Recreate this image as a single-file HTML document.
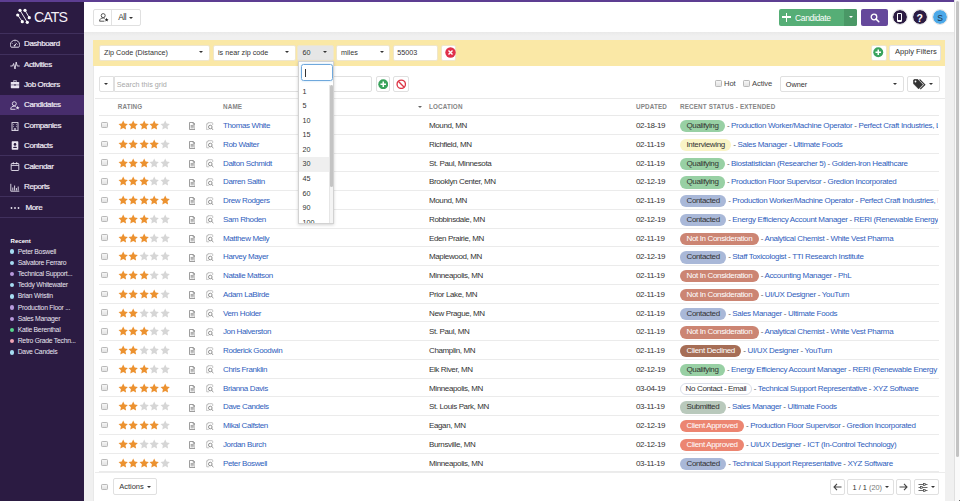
<!DOCTYPE html>
<html><head><meta charset="utf-8">
<style>
*{box-sizing:border-box;margin:0;padding:0}
html,body{width:960px;height:501px;overflow:hidden;background:#f0f0f0;font-family:"Liberation Sans",sans-serif;font-size:7.3px;color:#333}
.abs{position:absolute}
#stripe{position:absolute;left:0;top:0;width:954px;height:2px;background:#5d3e92}
#side{position:absolute;left:0;top:2px;width:84px;height:499px;background:#2b1b42;color:#e9e4f0}
#side .dv{position:absolute;left:0;width:84px;height:1px;background:#40305d}
#side .nav{position:absolute;left:0;width:84px;height:20px;line-height:20px;font-size:8px;letter-spacing:-0.38px;color:#f0ecf5;-webkit-text-stroke:0.2px #f0ecf5}
#side .nav .t{position:absolute;left:24px;top:0}
#side .nav svg{position:absolute;left:10px;top:5.5px;width:10px;height:9px}
#side .act{background:#472d6c}
.logo{position:absolute;left:16px;top:7px}
.logotxt{position:absolute;left:34px;top:6.6px;font-size:14.2px;color:#f4f0f8;letter-spacing:-0.9px;line-height:16px}
.rtitle{position:absolute;left:10.5px;top:234.5px;font-size:6.1px;font-weight:bold;color:#fff}
.rc{position:absolute;left:17.7px;font-size:6.8px;letter-spacing:-0.25px;color:#eae6f1;line-height:8px;white-space:nowrap}
.rc .dot{position:absolute;left:-7.8px;top:1.8px;width:4.4px;height:4.4px;border-radius:50%}
#hdr{position:absolute;left:84px;top:2px;width:870px;height:30px;background:#fff}
#scroll{position:absolute;left:953.5px;top:0;width:6.5px;height:501px;background:#fafafa;border-left:1px solid #e0e0e0}
#scroll .thumb{position:absolute;left:1.3px;top:1px;width:3.2px;height:456px;background:#c3c3c3;border-radius:2px}
.btn{position:absolute;background:#fff;border:1px solid #e0e0e0;border-radius:2px}
.caret{position:absolute;width:0;height:0;border-left:2.5px solid transparent;border-right:2.5px solid transparent;border-top:2.9px solid #333}
#filter{position:absolute;left:93px;top:40px;width:852px;height:25.7px;background:#fae8a6}
.sel{position:absolute;top:4.5px;height:16.2px;background:#fff;border-radius:2px;border:1px solid #efe6cc;line-height:14.2px;font-size:7.2px;color:#333}
.sel .t{position:absolute;left:4.5px;top:0.2px}
#panel{position:absolute;left:93px;top:65.7px;width:852px;height:436px;background:#fff;border-left:1px solid #e8e8e8}
.hline{position:absolute;height:1px;background:#e9e9e9}
.th{position:absolute;top:102.8px;font-size:6.3px;font-weight:bold;color:#858585;letter-spacing:0.15px;line-height:7px}
.row{position:absolute;left:99px;width:840px;height:18.75px;border-bottom:1px solid #ebebeb}
.row > span{position:absolute}
.cb{position:absolute;width:6.5px;height:6.5px;border:1px solid #b9b9b9;border-radius:1.2px;background:linear-gradient(#f6f6f6,#e2e2e2)}
.stars{left:18.5px;top:4px;height:9px;white-space:nowrap;font-size:0}
.st{width:10.4px;height:10.4px;margin-right:0.2px;display:inline-block}
.st.on{fill:#ec9230}
.st.off{fill:#d6d6d6}
.i1{left:89.5px;top:6.3px}
.i1 svg{width:6.5px;height:8px;display:block}
.i2{left:107.3px;top:5.7px}
.i2 svg{width:8px;height:8.5px;display:block}
.nm{left:124px;top:6px;color:#2f60bd;font-size:8px;letter-spacing:-0.38px;line-height:8px;white-space:nowrap}
.loc{left:330px;top:6px;font-size:8px;letter-spacing:-0.37px;line-height:8px;white-space:nowrap;color:#333}
.upd{left:537px;top:6px;font-size:8px;letter-spacing:-0.37px;line-height:8px;white-space:nowrap;color:#333}
.stat{left:581px;top:4.1px;width:258px;overflow:hidden;white-space:nowrap;line-height:12px;font-size:8px;letter-spacing:-0.33px}
.badge{display:inline-block;height:12.3px;line-height:12.3px;padding:0 6.5px;border-radius:6.2px;color:#333;font-size:8px;letter-spacing:-0.36px}
.b-q{background:#98d0a4}
.b-i{background:#faf4c6}
.b-c{background:#a9b8d8}
.b-n{background:#cc8573;color:#fff}
.b-d{background:#a66e56;color:#fff}
.b-e{background:#fff;border:1px solid #d9dde7;line-height:10.3px;padding:0 4.6px !important}
.b-s{background:#b9c9bc}
.b-a{background:#ec8571;color:#fff}
.dash{color:#555}
.lk{color:#2f60bd}
#dd{position:absolute;left:298px;top:60.8px;width:36px;height:163.2px;background:#fff;border:1px solid #d2d2d2;box-shadow:0 1px 3px rgba(0,0,0,0.18);overflow:hidden}
#dd .in{position:absolute;left:2px;top:2.2px;width:31.5px;height:17.2px;border:1px solid #6fa8dc;border-radius:2.5px;box-shadow:0 0 2px rgba(102,175,233,0.5)}
#dd .in .cur{position:absolute;left:3px;top:4px;width:0.8px;height:8px;background:#333}
#dd > div:not(.in):not(.sb){position:absolute;left:0;width:30px;height:14.55px;line-height:14.55px;font-size:7.2px;color:#333}
#dd > div span{position:absolute;left:3.5px}
#dd .hl{background:#efefef}
#dd .sb{position:absolute;left:29.5px;top:23.2px;width:5.5px;height:140px;background:#f4f4f4;border-left:1px solid #e6e6e6}
#dd .sb i{position:absolute;left:0.2px;top:0;width:3px;height:101.7px;background:#c4c4c4;border-radius:1.5px}
</style></head><body>
<div id="stripe"></div>
<div id="side">
  <svg class="logo" width="20" height="18" viewBox="14 8 20 18" style="left:0;top:-2px;position:absolute;left:14px;top:6px">
    <g stroke="#fff" stroke-width="0.9" fill="none">
      <path d="M17.7 15 L22.3 21.7"/><path d="M20 10.3 L27.3 22.3"/><path d="M25 10.3 L29.3 17.7"/>
    </g>
    <g fill="#fff"><circle cx="20" cy="10.3" r="1.6"/><circle cx="25" cy="10.3" r="1.6"/><circle cx="17.7" cy="15" r="1.6"/><circle cx="29.3" cy="17.7" r="1.6"/><circle cx="22.3" cy="21.7" r="1.6"/><circle cx="27.3" cy="22.3" r="1.6"/></g>
  </svg>
  <div class="logotxt">CATS</div>
  <div class="dv" style="top:31px"></div>
  <div class="nav" style="top:31.5px"><svg viewBox="0 0 10 9"><path d="M1.2 8.2 C0.2 7 0.3 5.8 0.5 5 C1 2.5 3 1.2 5 1.2 C7 1.2 9 2.5 9.5 5 C9.7 5.8 9.8 7 8.8 8.2 Z" fill="none" stroke="#e9e4f0" stroke-width="0.95"/><path d="M4.3 6.8 L6.6 4.2" stroke="#e9e4f0" stroke-width="1"/><circle cx="4.6" cy="6.6" r="0.9" fill="#e9e4f0"/><circle cx="2.6" cy="4.4" r="0.45" fill="#e9e4f0"/><circle cx="5" cy="3" r="0.45" fill="#e9e4f0"/><circle cx="7.6" cy="5.6" r="0.45" fill="#e9e4f0"/></svg><span class="t">Dashboard</span></div>
  <div class="dv" style="top:52px"></div>
  <div class="nav" style="top:53.1px"><svg viewBox="0 0 10 9"><path d="M0.3 5 H2.6 L3.6 2.5 L5 8 L6.2 1 L7.2 5 H9.7" fill="none" stroke="#e9e4f0" stroke-width="0.9"/></svg><span class="t">Activities</span></div>
  <div class="nav" style="top:72.5px"><svg viewBox="0 0 10 9"><path d="M3.5 1.5 V0.8 H6.5 V1.5" fill="none" stroke="#e9e4f0" stroke-width="0.9"/><rect x="0.8" y="2" width="8.4" height="6.2" rx="0.6" fill="#e9e4f0"/><rect x="4.3" y="4.3" width="1.4" height="1.3" fill="#2b1b42"/><path d="M0.8 4.9 H9.2" stroke="#2b1b42" stroke-width="0.5"/></svg><span class="t">Job Orders</span></div>
  <div class="nav act" style="top:93px"><svg viewBox="0 0 10 9"><circle cx="4.3" cy="2.7" r="2" fill="none" stroke="#e9e4f0" stroke-width="0.9"/><path d="M0.7 8.3 C0.7 5.8 2.5 5.2 4.3 5.2 C5 5.2 5.6 5.3 6 5.5" fill="none" stroke="#e9e4f0" stroke-width="0.9"/><path d="M0.7 8.3 H5.5" stroke="#e9e4f0" stroke-width="0.9"/><path d="M7.6 4.8 L8.2 6.2 L9.6 6.3 L8.5 7.2 L8.9 8.6 L7.6 7.8 L6.3 8.6 L6.7 7.2 L5.6 6.3 L7 6.2Z" fill="#e9e4f0"/></svg><span class="t">Candidates</span></div>
  <div class="nav" style="top:114px"><svg viewBox="0 0 10 9"><rect x="2" y="0.6" width="6" height="8" fill="none" stroke="#e9e4f0" stroke-width="0.9"/><path d="M3.6 2.3v0.8M6.4 2.3v0.8M3.6 4.3v0.8M6.4 4.3v0.8M4.3 8.5V6.6H5.7V8.5" stroke="#e9e4f0" stroke-width="0.8" fill="none"/></svg><span class="t">Companies</span></div>
  <div class="nav" style="top:133.5px"><svg viewBox="0 0 10 9"><rect x="1.7" y="0.3" width="6.6" height="8.4" rx="0.6" fill="#e9e4f0"/><circle cx="5" cy="3.4" r="1.3" fill="#2b1b42"/><path d="M3 7 C3 5.3 7 5.3 7 7Z" fill="#2b1b42"/></svg><span class="t">Contacts</span></div>
  <div class="dv" style="top:152.6px"></div>
  <div class="nav" style="top:154.5px"><svg viewBox="0 0 10 9"><rect x="1.2" y="1.5" width="7.6" height="7" rx="0.6" fill="none" stroke="#e9e4f0" stroke-width="0.9"/><path d="M1.2 3.4H8.8M3.3 0.2V2.3M6.7 0.2V2.3" stroke="#e9e4f0" stroke-width="0.9"/></svg><span class="t">Calendar</span></div>
  <div class="nav" style="top:175.1px"><svg viewBox="0 0 10 9"><path d="M0.8 0.8V8.2H9.3" fill="none" stroke="#e9e4f0" stroke-width="0.9"/><path d="M2.8 7.5V4.5M4.6 7.5V2.5M6.4 7.5V5M8.2 7.5V3.5" stroke="#e9e4f0" stroke-width="0.9"/></svg><span class="t">Reports</span></div>
  <div class="dv" style="top:194px"></div>
  <div class="nav" style="top:195.8px"><svg viewBox="0 0 10 9"><circle cx="1.5" cy="5" r="0.9" fill="#e9e4f0"/><circle cx="5" cy="5" r="0.9" fill="#e9e4f0"/><circle cx="8.5" cy="5" r="0.9" fill="#e9e4f0"/></svg><span class="t" style="left:25.5px">More</span></div>
  <div class="dv" style="top:215px"></div>
  <div class="rtitle">Recent</div>
</div>
<div id="recent">
<div class="rc" style="top:247.50px"><span class="dot" style="background:#a6dcf2"></span>Peter Boswell</div>
<div class="rc" style="top:258.72px"><span class="dot" style="background:#a6dcf2"></span>Salvatore Ferraro</div>
<div class="rc" style="top:269.94px"><span class="dot" style="background:#b799dc"></span>Technical Support...</div>
<div class="rc" style="top:281.16px"><span class="dot" style="background:#a6dcf2"></span>Teddy Whitewater</div>
<div class="rc" style="top:292.38px"><span class="dot" style="background:#a6dcf2"></span>Brian Wristin</div>
<div class="rc" style="top:303.60px"><span class="dot" style="background:#b799dc"></span>Production Floor ...</div>
<div class="rc" style="top:314.82px"><span class="dot" style="background:#b799dc"></span>Sales Manager</div>
<div class="rc" style="top:326.04px"><span class="dot" style="background:#58d68d"></span>Katie Berenthal</div>
<div class="rc" style="top:337.26px"><span class="dot" style="background:#f0a3b5"></span>Retro Grade Techn...</div>
<div class="rc" style="top:348.48px"><span class="dot" style="background:#a6dcf2"></span>Dave Candels</div>

</div>
<div id="hdr"></div>
<div class="abs" style="left:84px;top:32px;width:870px;height:4px;background:linear-gradient(#e9e9e9,#f0f0f0)"></div>
<!-- header All button -->
<div class="btn" style="left:93.3px;top:9.2px;width:47.3px;height:16.6px"></div>
<div class="abs" style="left:111.2px;top:10px;width:1px;height:15.3px;background:#e2e2e2"></div>
<svg class="abs" style="left:98.5px;top:12.8px" width="10" height="9" viewBox="0 0 10 9"><circle cx="4.2" cy="2.6" r="2" fill="none" stroke="#444" stroke-width="0.9"/><path d="M0.6 8.2 C0.6 5.6 2.4 5 4.2 5 C4.9 5 5.5 5.1 5.9 5.3" fill="none" stroke="#444" stroke-width="0.9"/><path d="M0.6 8.2 H5.4" stroke="#444" stroke-width="0.9"/><path d="M7.6 4.8 L8.2 6.2 L9.6 6.3 L8.5 7.2 L8.9 8.6 L7.6 7.8 L6.3 8.6 L6.7 7.2 L5.6 6.3 L7 6.2Z" fill="#222"/></svg>
<div class="abs" style="left:118.2px;top:13.2px;font-size:8.2px;letter-spacing:-0.4px;line-height:9px;color:#333">All</div>
<div class="caret" style="left:128.5px;top:16.5px"></div>
<!-- candidate button -->
<div class="abs" style="left:778.9px;top:9.3px;width:78.6px;height:16.4px;background:#56ae76;border-radius:2px"></div>
<div class="abs" style="left:844.3px;top:9.3px;width:13.2px;height:16.4px;background:#4a9866;border-radius:0 2px 2px 0"></div>
<div class="abs" style="left:782px;top:12.7px;width:9px;height:9px"><div class="abs" style="left:3.7px;top:0;width:1.7px;height:9px;background:#fff"></div><div class="abs" style="left:0;top:3.7px;width:9px;height:1.7px;background:#fff"></div></div>
<div class="abs" style="left:795px;top:13.6px;font-size:8.5px;letter-spacing:-0.35px;line-height:9px;color:#fff">Candidate</div>
<div class="caret" style="left:848.5px;top:16.3px;border-top-color:#fff"></div>
<div class="abs" style="left:861px;top:9.3px;width:27px;height:16.4px;background:#65489b;border-radius:2px"></div>
<svg class="abs" style="left:869.5px;top:12.5px" width="10" height="10" viewBox="0 0 10 10"><circle cx="4" cy="4" r="2.8" fill="none" stroke="#fff" stroke-width="1.3"/><path d="M6.1 6.1L8.8 8.8" stroke="#fff" stroke-width="1.5" stroke-linecap="round"/></svg>
<div class="abs" style="left:891.6px;top:9.4px;width:16px;height:16px;border-radius:50%;background:#2b1b42;border:1.8px solid #e2e2e2;background-clip:padding-box"></div>
<div class="abs" style="left:896.9px;top:13.1px;width:5.4px;height:8.6px;border:1px solid #fff;border-bottom-width:2.2px;border-radius:1.2px"></div>
<div class="abs" style="left:911.8px;top:9.4px;width:16px;height:16px;border-radius:50%;background:#2b1b42;border:1.8px solid #e2e2e2;background-clip:padding-box"></div>
<div class="abs" style="left:911.8px;top:10.7px;width:16px;text-align:center;font-size:10.5px;font-weight:bold;line-height:14px;color:#fff">?</div>
<div class="abs" style="left:932.2px;top:9.4px;width:16px;height:16px;border-radius:50%;background:#4ba8e8;border:1.8px solid #e2e2e2;background-clip:padding-box"></div>
<div class="abs" style="left:932.2px;top:10.6px;width:16px;text-align:center;font-size:8.5px;line-height:14px;color:#1b3047">S</div>
<div id="scroll"><div class="thumb"></div></div>

<div id="filter">
  <div class="sel" style="left:5.5px;width:111px"><span class="t">Zip Code (Distance)</span><div class="caret" style="left:99.5px;top:5.8px"></div></div>
  <div class="sel" style="left:119.5px;width:83px"><span class="t">is near zip code</span><div class="caret" style="left:71.2px;top:5.8px"></div></div>
  <div class="sel" style="left:204px;width:36.5px;background:#e6e6e6"><span class="t">60</span><div class="caret" style="left:24.8px;top:5.8px"></div></div>
  <div class="sel" style="left:242.5px;width:54.8px"><span class="t">miles</span><div class="caret" style="left:43.0px;top:5.8px"></div></div>
  <div class="sel" style="left:300.2px;width:45.3px"><span class="t" style="left:3px">55003</span></div>
  <div class="sel" style="left:348.2px;width:15.3px"></div>
  <svg class="abs" style="left:351.5px;top:7.2px" width="11" height="11" viewBox="0 0 11 11"><circle cx="5.5" cy="5.5" r="5.2" fill="#e0304a"/><path d="M3.5 3.5L7.5 7.5M7.5 3.5L3.5 7.5" stroke="#fff" stroke-width="1.4"/></svg>
  <div class="sel" style="left:777.5px;width:16px"></div>
  <svg class="abs" style="left:780.3px;top:7.3px" width="10.5" height="10.5" viewBox="0 0 11 11"><circle cx="5.5" cy="5.5" r="5.2" fill="#3aa35c"/><path d="M5.5 2.6V8.4M2.6 5.5H8.4" stroke="#fff" stroke-width="1.6"/></svg>
  <div class="sel" style="left:796px;width:52px;border:1px solid #e4e4e4"><span class="t" style="left:5px;top:-0.5px;font-size:7.6px">Apply Filters</span></div>
</div>

<div id="panel"></div>
<!-- grid toolbar -->
<div class="btn" style="left:99px;top:75.8px;width:15px;height:16.7px;border-radius:2px 0 0 2px"></div>
<div class="caret" style="left:104px;top:82.8px"></div>
<div class="btn" style="left:113.5px;top:75.8px;width:258.2px;height:16.7px;border-radius:0 2px 2px 0"></div>
<div class="abs" style="left:116.8px;top:79.8px;font-size:7.2px;line-height:9px;color:#a8a8a8">Search this grid</div>
<div class="btn" style="left:375.8px;top:75.8px;width:14.6px;height:16.7px"></div>
<svg class="abs" style="left:377.9px;top:78.9px" width="10.5" height="10.5" viewBox="0 0 11 11"><circle cx="5.5" cy="5.5" r="5.2" fill="#3aa35c"/><path d="M5.5 2.6V8.4M2.6 5.5H8.4" stroke="#fff" stroke-width="1.6"/></svg>
<div class="btn" style="left:393.3px;top:75.8px;width:15.7px;height:16.7px"></div>
<svg class="abs" style="left:395.8px;top:78.9px" width="10.5" height="10.5" viewBox="0 0 11 11"><circle cx="5.5" cy="5.5" r="4.4" fill="none" stroke="#dc3545" stroke-width="1.4"/><path d="M2.4 2.4L8.6 8.6" stroke="#dc3545" stroke-width="1.4"/></svg>
<div class="cb" style="left:715.2px;top:80.3px"></div>
<div class="abs" style="left:724px;top:79.2px;font-size:7.6px;letter-spacing:-0.1px;line-height:9px;color:#444">Hot</div>
<div class="cb" style="left:743.2px;top:80.3px"></div>
<div class="abs" style="left:752px;top:79.2px;font-size:7.6px;letter-spacing:-0.1px;line-height:9px;color:#444">Active</div>
<div class="btn" style="left:779.5px;top:75.8px;width:124.8px;height:16.7px"></div>
<div class="abs" style="left:785.8px;top:79.8px;font-size:7.3px;line-height:9px;color:#333">Owner</div>
<div class="caret" style="left:892.8px;top:83px"></div>
<div class="btn" style="left:907px;top:75.8px;width:32.5px;height:16.7px"></div>
<svg class="abs" style="left:912.5px;top:78.5px" width="14" height="11" viewBox="0 0 14 11"><path d="M0.3 1.3V4.6L5.6 9.9L9.9 5.6L4.6 0.3H1.3Z" fill="#333" stroke="#333" stroke-width="0.5" stroke-linejoin="round"/><circle cx="2.5" cy="2.5" r="0.9" fill="#fff"/><path d="M6.6 0.5L11.8 5.7L7.3 10.2" fill="none" stroke="#333" stroke-width="1.1"/></svg>
<div class="caret" style="left:928.8px;top:83px"></div>

<!-- table header -->
<div class="hline" style="left:94.5px;top:98px;width:850.5px"></div>
<div class="th" style="left:117.8px">RATING</div>
<div class="th" style="left:223px">NAME</div>
<div class="caret" style="left:417.5px;top:105.8px;border-top-color:#666"></div>
<div class="th" style="left:429px">LOCATION</div>
<div class="th" style="left:636px">UPDATED</div>
<div class="th" style="left:680px">RECENT STATUS - EXTENDED</div>
<div class="hline" style="left:99px;top:115px;width:840px"></div>
<div class="row" style="top:116.00px">
<span class="cb" style="left:2.2px;top:5.8px"></span>
<span class="stars"><svg class="st on" viewBox="0 0 24 24"><path d="M12 1.2l3.3 6.9 7.5 1-5.5 5.2 1.4 7.5L12 18.2l-6.7 3.6 1.4-7.5L1.2 9.1l7.5-1z"/></svg><svg class="st on" viewBox="0 0 24 24"><path d="M12 1.2l3.3 6.9 7.5 1-5.5 5.2 1.4 7.5L12 18.2l-6.7 3.6 1.4-7.5L1.2 9.1l7.5-1z"/></svg><svg class="st on" viewBox="0 0 24 24"><path d="M12 1.2l3.3 6.9 7.5 1-5.5 5.2 1.4 7.5L12 18.2l-6.7 3.6 1.4-7.5L1.2 9.1l7.5-1z"/></svg><svg class="st on" viewBox="0 0 24 24"><path d="M12 1.2l3.3 6.9 7.5 1-5.5 5.2 1.4 7.5L12 18.2l-6.7 3.6 1.4-7.5L1.2 9.1l7.5-1z"/></svg><svg class="st off" viewBox="0 0 24 24"><path d="M12 1.2l3.3 6.9 7.5 1-5.5 5.2 1.4 7.5L12 18.2l-6.7 3.6 1.4-7.5L1.2 9.1l7.5-1z"/></svg></span>
<span class="i1"><svg class="ic1" viewBox="0 0 8 10"><path d="M0.6 0.6h4.6l2.2 2.2v6.6H0.6z M5.2 0.6v2.2h2.2" fill="none" stroke="#777" stroke-width="0.9"/><path d="M2 4.3h4M2 5.8h4M2 7.3h4" stroke="#777" stroke-width="0.8"/></svg></span><span class="i2"><svg class="ic2" viewBox="0 0 8 8.5"><path d="M3.2 7.8H0.7V2L2 0.7H6.1Q6.7 0.7 6.7 1.3V3" fill="none" stroke="#b0b0b0" stroke-width="0.75"/><path d="M0.7 2H2V0.7" fill="none" stroke="#b0b0b0" stroke-width="0.6"/><circle cx="4.3" cy="5" r="1.8" fill="none" stroke="#7a7a7a" stroke-width="0.8"/><path d="M5.6 6.3L7.4 8" stroke="#7a7a7a" stroke-width="0.9"/></svg></span>
<span class="nm">Thomas White</span>
<span class="loc">Mound, MN</span>
<span class="upd">02-18-19</span>
<span class="stat"><span class="badge b-q">Qualifying</span><span class="dash"> - </span><span class="lk">Production Worker/Machine Operator</span><span class="dash"> - </span><span class="lk">Perfect Craft Industries, LLC</span></span>
</div>
<div class="row" style="top:134.75px">
<span class="cb" style="left:2.2px;top:5.8px"></span>
<span class="stars"><svg class="st on" viewBox="0 0 24 24"><path d="M12 1.2l3.3 6.9 7.5 1-5.5 5.2 1.4 7.5L12 18.2l-6.7 3.6 1.4-7.5L1.2 9.1l7.5-1z"/></svg><svg class="st on" viewBox="0 0 24 24"><path d="M12 1.2l3.3 6.9 7.5 1-5.5 5.2 1.4 7.5L12 18.2l-6.7 3.6 1.4-7.5L1.2 9.1l7.5-1z"/></svg><svg class="st on" viewBox="0 0 24 24"><path d="M12 1.2l3.3 6.9 7.5 1-5.5 5.2 1.4 7.5L12 18.2l-6.7 3.6 1.4-7.5L1.2 9.1l7.5-1z"/></svg><svg class="st on" viewBox="0 0 24 24"><path d="M12 1.2l3.3 6.9 7.5 1-5.5 5.2 1.4 7.5L12 18.2l-6.7 3.6 1.4-7.5L1.2 9.1l7.5-1z"/></svg><svg class="st off" viewBox="0 0 24 24"><path d="M12 1.2l3.3 6.9 7.5 1-5.5 5.2 1.4 7.5L12 18.2l-6.7 3.6 1.4-7.5L1.2 9.1l7.5-1z"/></svg></span>
<span class="i1"><svg class="ic1" viewBox="0 0 8 10"><path d="M0.6 0.6h4.6l2.2 2.2v6.6H0.6z M5.2 0.6v2.2h2.2" fill="none" stroke="#777" stroke-width="0.9"/><path d="M2 4.3h4M2 5.8h4M2 7.3h4" stroke="#777" stroke-width="0.8"/></svg></span><span class="i2"><svg class="ic2" viewBox="0 0 8 8.5"><path d="M3.2 7.8H0.7V2L2 0.7H6.1Q6.7 0.7 6.7 1.3V3" fill="none" stroke="#b0b0b0" stroke-width="0.75"/><path d="M0.7 2H2V0.7" fill="none" stroke="#b0b0b0" stroke-width="0.6"/><circle cx="4.3" cy="5" r="1.8" fill="none" stroke="#7a7a7a" stroke-width="0.8"/><path d="M5.6 6.3L7.4 8" stroke="#7a7a7a" stroke-width="0.9"/></svg></span>
<span class="nm">Rob Walter</span>
<span class="loc">Richfield, MN</span>
<span class="upd">02-11-19</span>
<span class="stat"><span class="badge b-i">Interviewing</span><span class="dash"> - </span><span class="lk">Sales Manager</span><span class="dash"> - </span><span class="lk">Ultimate Foods</span></span>
</div>
<div class="row" style="top:153.50px">
<span class="cb" style="left:2.2px;top:5.8px"></span>
<span class="stars"><svg class="st on" viewBox="0 0 24 24"><path d="M12 1.2l3.3 6.9 7.5 1-5.5 5.2 1.4 7.5L12 18.2l-6.7 3.6 1.4-7.5L1.2 9.1l7.5-1z"/></svg><svg class="st on" viewBox="0 0 24 24"><path d="M12 1.2l3.3 6.9 7.5 1-5.5 5.2 1.4 7.5L12 18.2l-6.7 3.6 1.4-7.5L1.2 9.1l7.5-1z"/></svg><svg class="st on" viewBox="0 0 24 24"><path d="M12 1.2l3.3 6.9 7.5 1-5.5 5.2 1.4 7.5L12 18.2l-6.7 3.6 1.4-7.5L1.2 9.1l7.5-1z"/></svg><svg class="st off" viewBox="0 0 24 24"><path d="M12 1.2l3.3 6.9 7.5 1-5.5 5.2 1.4 7.5L12 18.2l-6.7 3.6 1.4-7.5L1.2 9.1l7.5-1z"/></svg><svg class="st off" viewBox="0 0 24 24"><path d="M12 1.2l3.3 6.9 7.5 1-5.5 5.2 1.4 7.5L12 18.2l-6.7 3.6 1.4-7.5L1.2 9.1l7.5-1z"/></svg></span>
<span class="i1"><svg class="ic1" viewBox="0 0 8 10"><path d="M0.6 0.6h4.6l2.2 2.2v6.6H0.6z M5.2 0.6v2.2h2.2" fill="none" stroke="#777" stroke-width="0.9"/><path d="M2 4.3h4M2 5.8h4M2 7.3h4" stroke="#777" stroke-width="0.8"/></svg></span><span class="i2"><svg class="ic2" viewBox="0 0 8 8.5"><path d="M3.2 7.8H0.7V2L2 0.7H6.1Q6.7 0.7 6.7 1.3V3" fill="none" stroke="#b0b0b0" stroke-width="0.75"/><path d="M0.7 2H2V0.7" fill="none" stroke="#b0b0b0" stroke-width="0.6"/><circle cx="4.3" cy="5" r="1.8" fill="none" stroke="#7a7a7a" stroke-width="0.8"/><path d="M5.6 6.3L7.4 8" stroke="#7a7a7a" stroke-width="0.9"/></svg></span>
<span class="nm">Dalton Schmidt</span>
<span class="loc">St. Paul, Minnesota</span>
<span class="upd">02-11-19</span>
<span class="stat"><span class="badge b-q">Qualifying</span><span class="dash"> - </span><span class="lk">Biostatistician (Researcher 5)</span><span class="dash"> - </span><span class="lk">Golden-Iron Healthcare</span></span>
</div>
<div class="row" style="top:172.25px">
<span class="cb" style="left:2.2px;top:5.8px"></span>
<span class="stars"><svg class="st on" viewBox="0 0 24 24"><path d="M12 1.2l3.3 6.9 7.5 1-5.5 5.2 1.4 7.5L12 18.2l-6.7 3.6 1.4-7.5L1.2 9.1l7.5-1z"/></svg><svg class="st on" viewBox="0 0 24 24"><path d="M12 1.2l3.3 6.9 7.5 1-5.5 5.2 1.4 7.5L12 18.2l-6.7 3.6 1.4-7.5L1.2 9.1l7.5-1z"/></svg><svg class="st on" viewBox="0 0 24 24"><path d="M12 1.2l3.3 6.9 7.5 1-5.5 5.2 1.4 7.5L12 18.2l-6.7 3.6 1.4-7.5L1.2 9.1l7.5-1z"/></svg><svg class="st off" viewBox="0 0 24 24"><path d="M12 1.2l3.3 6.9 7.5 1-5.5 5.2 1.4 7.5L12 18.2l-6.7 3.6 1.4-7.5L1.2 9.1l7.5-1z"/></svg><svg class="st off" viewBox="0 0 24 24"><path d="M12 1.2l3.3 6.9 7.5 1-5.5 5.2 1.4 7.5L12 18.2l-6.7 3.6 1.4-7.5L1.2 9.1l7.5-1z"/></svg></span>
<span class="i1"><svg class="ic1" viewBox="0 0 8 10"><path d="M0.6 0.6h4.6l2.2 2.2v6.6H0.6z M5.2 0.6v2.2h2.2" fill="none" stroke="#777" stroke-width="0.9"/><path d="M2 4.3h4M2 5.8h4M2 7.3h4" stroke="#777" stroke-width="0.8"/></svg></span><span class="i2"><svg class="ic2" viewBox="0 0 8 8.5"><path d="M3.2 7.8H0.7V2L2 0.7H6.1Q6.7 0.7 6.7 1.3V3" fill="none" stroke="#b0b0b0" stroke-width="0.75"/><path d="M0.7 2H2V0.7" fill="none" stroke="#b0b0b0" stroke-width="0.6"/><circle cx="4.3" cy="5" r="1.8" fill="none" stroke="#7a7a7a" stroke-width="0.8"/><path d="M5.6 6.3L7.4 8" stroke="#7a7a7a" stroke-width="0.9"/></svg></span>
<span class="nm">Darren Saltin</span>
<span class="loc">Brooklyn Center, MN</span>
<span class="upd">02-12-19</span>
<span class="stat"><span class="badge b-q">Qualifying</span><span class="dash"> - </span><span class="lk">Production Floor Supervisor</span><span class="dash"> - </span><span class="lk">Gredion Incorporated</span></span>
</div>
<div class="row" style="top:191.00px">
<span class="cb" style="left:2.2px;top:5.8px"></span>
<span class="stars"><svg class="st on" viewBox="0 0 24 24"><path d="M12 1.2l3.3 6.9 7.5 1-5.5 5.2 1.4 7.5L12 18.2l-6.7 3.6 1.4-7.5L1.2 9.1l7.5-1z"/></svg><svg class="st on" viewBox="0 0 24 24"><path d="M12 1.2l3.3 6.9 7.5 1-5.5 5.2 1.4 7.5L12 18.2l-6.7 3.6 1.4-7.5L1.2 9.1l7.5-1z"/></svg><svg class="st on" viewBox="0 0 24 24"><path d="M12 1.2l3.3 6.9 7.5 1-5.5 5.2 1.4 7.5L12 18.2l-6.7 3.6 1.4-7.5L1.2 9.1l7.5-1z"/></svg><svg class="st on" viewBox="0 0 24 24"><path d="M12 1.2l3.3 6.9 7.5 1-5.5 5.2 1.4 7.5L12 18.2l-6.7 3.6 1.4-7.5L1.2 9.1l7.5-1z"/></svg><svg class="st on" viewBox="0 0 24 24"><path d="M12 1.2l3.3 6.9 7.5 1-5.5 5.2 1.4 7.5L12 18.2l-6.7 3.6 1.4-7.5L1.2 9.1l7.5-1z"/></svg></span>
<span class="i1"><svg class="ic1" viewBox="0 0 8 10"><path d="M0.6 0.6h4.6l2.2 2.2v6.6H0.6z M5.2 0.6v2.2h2.2" fill="none" stroke="#777" stroke-width="0.9"/><path d="M2 4.3h4M2 5.8h4M2 7.3h4" stroke="#777" stroke-width="0.8"/></svg></span><span class="i2"><svg class="ic2" viewBox="0 0 8 8.5"><path d="M3.2 7.8H0.7V2L2 0.7H6.1Q6.7 0.7 6.7 1.3V3" fill="none" stroke="#b0b0b0" stroke-width="0.75"/><path d="M0.7 2H2V0.7" fill="none" stroke="#b0b0b0" stroke-width="0.6"/><circle cx="4.3" cy="5" r="1.8" fill="none" stroke="#7a7a7a" stroke-width="0.8"/><path d="M5.6 6.3L7.4 8" stroke="#7a7a7a" stroke-width="0.9"/></svg></span>
<span class="nm">Drew Rodgers</span>
<span class="loc">Mound, MN</span>
<span class="upd">02-11-19</span>
<span class="stat"><span class="badge b-c">Contacted</span><span class="dash"> - </span><span class="lk">Production Worker/Machine Operator</span><span class="dash"> - </span><span class="lk">Perfect Craft Industries, LLC</span></span>
</div>
<div class="row" style="top:209.75px">
<span class="cb" style="left:2.2px;top:5.8px"></span>
<span class="stars"><svg class="st on" viewBox="0 0 24 24"><path d="M12 1.2l3.3 6.9 7.5 1-5.5 5.2 1.4 7.5L12 18.2l-6.7 3.6 1.4-7.5L1.2 9.1l7.5-1z"/></svg><svg class="st on" viewBox="0 0 24 24"><path d="M12 1.2l3.3 6.9 7.5 1-5.5 5.2 1.4 7.5L12 18.2l-6.7 3.6 1.4-7.5L1.2 9.1l7.5-1z"/></svg><svg class="st on" viewBox="0 0 24 24"><path d="M12 1.2l3.3 6.9 7.5 1-5.5 5.2 1.4 7.5L12 18.2l-6.7 3.6 1.4-7.5L1.2 9.1l7.5-1z"/></svg><svg class="st off" viewBox="0 0 24 24"><path d="M12 1.2l3.3 6.9 7.5 1-5.5 5.2 1.4 7.5L12 18.2l-6.7 3.6 1.4-7.5L1.2 9.1l7.5-1z"/></svg><svg class="st off" viewBox="0 0 24 24"><path d="M12 1.2l3.3 6.9 7.5 1-5.5 5.2 1.4 7.5L12 18.2l-6.7 3.6 1.4-7.5L1.2 9.1l7.5-1z"/></svg></span>
<span class="i1"><svg class="ic1" viewBox="0 0 8 10"><path d="M0.6 0.6h4.6l2.2 2.2v6.6H0.6z M5.2 0.6v2.2h2.2" fill="none" stroke="#777" stroke-width="0.9"/><path d="M2 4.3h4M2 5.8h4M2 7.3h4" stroke="#777" stroke-width="0.8"/></svg></span><span class="i2"><svg class="ic2" viewBox="0 0 8 8.5"><path d="M3.2 7.8H0.7V2L2 0.7H6.1Q6.7 0.7 6.7 1.3V3" fill="none" stroke="#b0b0b0" stroke-width="0.75"/><path d="M0.7 2H2V0.7" fill="none" stroke="#b0b0b0" stroke-width="0.6"/><circle cx="4.3" cy="5" r="1.8" fill="none" stroke="#7a7a7a" stroke-width="0.8"/><path d="M5.6 6.3L7.4 8" stroke="#7a7a7a" stroke-width="0.9"/></svg></span>
<span class="nm">Sam Rhoden</span>
<span class="loc">Robbinsdale, MN</span>
<span class="upd">02-12-19</span>
<span class="stat"><span class="badge b-c">Contacted</span><span class="dash"> - </span><span class="lk">Energy Efficiency Account Manager</span><span class="dash"> - </span><span class="lk">RERI (Renewable Energy Resources Inc)</span></span>
</div>
<div class="row" style="top:228.50px">
<span class="cb" style="left:2.2px;top:5.8px"></span>
<span class="stars"><svg class="st on" viewBox="0 0 24 24"><path d="M12 1.2l3.3 6.9 7.5 1-5.5 5.2 1.4 7.5L12 18.2l-6.7 3.6 1.4-7.5L1.2 9.1l7.5-1z"/></svg><svg class="st on" viewBox="0 0 24 24"><path d="M12 1.2l3.3 6.9 7.5 1-5.5 5.2 1.4 7.5L12 18.2l-6.7 3.6 1.4-7.5L1.2 9.1l7.5-1z"/></svg><svg class="st on" viewBox="0 0 24 24"><path d="M12 1.2l3.3 6.9 7.5 1-5.5 5.2 1.4 7.5L12 18.2l-6.7 3.6 1.4-7.5L1.2 9.1l7.5-1z"/></svg><svg class="st off" viewBox="0 0 24 24"><path d="M12 1.2l3.3 6.9 7.5 1-5.5 5.2 1.4 7.5L12 18.2l-6.7 3.6 1.4-7.5L1.2 9.1l7.5-1z"/></svg><svg class="st off" viewBox="0 0 24 24"><path d="M12 1.2l3.3 6.9 7.5 1-5.5 5.2 1.4 7.5L12 18.2l-6.7 3.6 1.4-7.5L1.2 9.1l7.5-1z"/></svg></span>
<span class="i1"><svg class="ic1" viewBox="0 0 8 10"><path d="M0.6 0.6h4.6l2.2 2.2v6.6H0.6z M5.2 0.6v2.2h2.2" fill="none" stroke="#777" stroke-width="0.9"/><path d="M2 4.3h4M2 5.8h4M2 7.3h4" stroke="#777" stroke-width="0.8"/></svg></span><span class="i2"><svg class="ic2" viewBox="0 0 8 8.5"><path d="M3.2 7.8H0.7V2L2 0.7H6.1Q6.7 0.7 6.7 1.3V3" fill="none" stroke="#b0b0b0" stroke-width="0.75"/><path d="M0.7 2H2V0.7" fill="none" stroke="#b0b0b0" stroke-width="0.6"/><circle cx="4.3" cy="5" r="1.8" fill="none" stroke="#7a7a7a" stroke-width="0.8"/><path d="M5.6 6.3L7.4 8" stroke="#7a7a7a" stroke-width="0.9"/></svg></span>
<span class="nm">Matthew Melly</span>
<span class="loc">Eden Prairie, MN</span>
<span class="upd">02-11-19</span>
<span class="stat"><span class="badge b-n">Not In Consideration</span><span class="dash"> - </span><span class="lk">Analytical Chemist</span><span class="dash"> - </span><span class="lk">White Vest Pharma</span></span>
</div>
<div class="row" style="top:247.25px">
<span class="cb" style="left:2.2px;top:5.8px"></span>
<span class="stars"><svg class="st on" viewBox="0 0 24 24"><path d="M12 1.2l3.3 6.9 7.5 1-5.5 5.2 1.4 7.5L12 18.2l-6.7 3.6 1.4-7.5L1.2 9.1l7.5-1z"/></svg><svg class="st on" viewBox="0 0 24 24"><path d="M12 1.2l3.3 6.9 7.5 1-5.5 5.2 1.4 7.5L12 18.2l-6.7 3.6 1.4-7.5L1.2 9.1l7.5-1z"/></svg><svg class="st off" viewBox="0 0 24 24"><path d="M12 1.2l3.3 6.9 7.5 1-5.5 5.2 1.4 7.5L12 18.2l-6.7 3.6 1.4-7.5L1.2 9.1l7.5-1z"/></svg><svg class="st off" viewBox="0 0 24 24"><path d="M12 1.2l3.3 6.9 7.5 1-5.5 5.2 1.4 7.5L12 18.2l-6.7 3.6 1.4-7.5L1.2 9.1l7.5-1z"/></svg><svg class="st off" viewBox="0 0 24 24"><path d="M12 1.2l3.3 6.9 7.5 1-5.5 5.2 1.4 7.5L12 18.2l-6.7 3.6 1.4-7.5L1.2 9.1l7.5-1z"/></svg></span>
<span class="i1"><svg class="ic1" viewBox="0 0 8 10"><path d="M0.6 0.6h4.6l2.2 2.2v6.6H0.6z M5.2 0.6v2.2h2.2" fill="none" stroke="#777" stroke-width="0.9"/><path d="M2 4.3h4M2 5.8h4M2 7.3h4" stroke="#777" stroke-width="0.8"/></svg></span><span class="i2"><svg class="ic2" viewBox="0 0 8 8.5"><path d="M3.2 7.8H0.7V2L2 0.7H6.1Q6.7 0.7 6.7 1.3V3" fill="none" stroke="#b0b0b0" stroke-width="0.75"/><path d="M0.7 2H2V0.7" fill="none" stroke="#b0b0b0" stroke-width="0.6"/><circle cx="4.3" cy="5" r="1.8" fill="none" stroke="#7a7a7a" stroke-width="0.8"/><path d="M5.6 6.3L7.4 8" stroke="#7a7a7a" stroke-width="0.9"/></svg></span>
<span class="nm">Harvey Mayer</span>
<span class="loc">Maplewood, MN</span>
<span class="upd">02-12-19</span>
<span class="stat"><span class="badge b-c">Contacted</span><span class="dash"> - </span><span class="lk">Staff Toxicologist</span><span class="dash"> - </span><span class="lk">TTI Research Institute</span></span>
</div>
<div class="row" style="top:266.00px">
<span class="cb" style="left:2.2px;top:5.8px"></span>
<span class="stars"><svg class="st on" viewBox="0 0 24 24"><path d="M12 1.2l3.3 6.9 7.5 1-5.5 5.2 1.4 7.5L12 18.2l-6.7 3.6 1.4-7.5L1.2 9.1l7.5-1z"/></svg><svg class="st on" viewBox="0 0 24 24"><path d="M12 1.2l3.3 6.9 7.5 1-5.5 5.2 1.4 7.5L12 18.2l-6.7 3.6 1.4-7.5L1.2 9.1l7.5-1z"/></svg><svg class="st on" viewBox="0 0 24 24"><path d="M12 1.2l3.3 6.9 7.5 1-5.5 5.2 1.4 7.5L12 18.2l-6.7 3.6 1.4-7.5L1.2 9.1l7.5-1z"/></svg><svg class="st off" viewBox="0 0 24 24"><path d="M12 1.2l3.3 6.9 7.5 1-5.5 5.2 1.4 7.5L12 18.2l-6.7 3.6 1.4-7.5L1.2 9.1l7.5-1z"/></svg><svg class="st off" viewBox="0 0 24 24"><path d="M12 1.2l3.3 6.9 7.5 1-5.5 5.2 1.4 7.5L12 18.2l-6.7 3.6 1.4-7.5L1.2 9.1l7.5-1z"/></svg></span>
<span class="i1"><svg class="ic1" viewBox="0 0 8 10"><path d="M0.6 0.6h4.6l2.2 2.2v6.6H0.6z M5.2 0.6v2.2h2.2" fill="none" stroke="#777" stroke-width="0.9"/><path d="M2 4.3h4M2 5.8h4M2 7.3h4" stroke="#777" stroke-width="0.8"/></svg></span><span class="i2"><svg class="ic2" viewBox="0 0 8 8.5"><path d="M3.2 7.8H0.7V2L2 0.7H6.1Q6.7 0.7 6.7 1.3V3" fill="none" stroke="#b0b0b0" stroke-width="0.75"/><path d="M0.7 2H2V0.7" fill="none" stroke="#b0b0b0" stroke-width="0.6"/><circle cx="4.3" cy="5" r="1.8" fill="none" stroke="#7a7a7a" stroke-width="0.8"/><path d="M5.6 6.3L7.4 8" stroke="#7a7a7a" stroke-width="0.9"/></svg></span>
<span class="nm">Natalie Mattson</span>
<span class="loc">Minneapolis, MN</span>
<span class="upd">02-11-19</span>
<span class="stat"><span class="badge b-n">Not In Consideration</span><span class="dash"> - </span><span class="lk">Accounting Manager</span><span class="dash"> - </span><span class="lk">PhL</span></span>
</div>
<div class="row" style="top:284.75px">
<span class="cb" style="left:2.2px;top:5.8px"></span>
<span class="stars"><svg class="st on" viewBox="0 0 24 24"><path d="M12 1.2l3.3 6.9 7.5 1-5.5 5.2 1.4 7.5L12 18.2l-6.7 3.6 1.4-7.5L1.2 9.1l7.5-1z"/></svg><svg class="st on" viewBox="0 0 24 24"><path d="M12 1.2l3.3 6.9 7.5 1-5.5 5.2 1.4 7.5L12 18.2l-6.7 3.6 1.4-7.5L1.2 9.1l7.5-1z"/></svg><svg class="st on" viewBox="0 0 24 24"><path d="M12 1.2l3.3 6.9 7.5 1-5.5 5.2 1.4 7.5L12 18.2l-6.7 3.6 1.4-7.5L1.2 9.1l7.5-1z"/></svg><svg class="st on" viewBox="0 0 24 24"><path d="M12 1.2l3.3 6.9 7.5 1-5.5 5.2 1.4 7.5L12 18.2l-6.7 3.6 1.4-7.5L1.2 9.1l7.5-1z"/></svg><svg class="st off" viewBox="0 0 24 24"><path d="M12 1.2l3.3 6.9 7.5 1-5.5 5.2 1.4 7.5L12 18.2l-6.7 3.6 1.4-7.5L1.2 9.1l7.5-1z"/></svg></span>
<span class="i1"><svg class="ic1" viewBox="0 0 8 10"><path d="M0.6 0.6h4.6l2.2 2.2v6.6H0.6z M5.2 0.6v2.2h2.2" fill="none" stroke="#777" stroke-width="0.9"/><path d="M2 4.3h4M2 5.8h4M2 7.3h4" stroke="#777" stroke-width="0.8"/></svg></span><span class="i2"><svg class="ic2" viewBox="0 0 8 8.5"><path d="M3.2 7.8H0.7V2L2 0.7H6.1Q6.7 0.7 6.7 1.3V3" fill="none" stroke="#b0b0b0" stroke-width="0.75"/><path d="M0.7 2H2V0.7" fill="none" stroke="#b0b0b0" stroke-width="0.6"/><circle cx="4.3" cy="5" r="1.8" fill="none" stroke="#7a7a7a" stroke-width="0.8"/><path d="M5.6 6.3L7.4 8" stroke="#7a7a7a" stroke-width="0.9"/></svg></span>
<span class="nm">Adam LaBirde</span>
<span class="loc">Prior Lake, MN</span>
<span class="upd">02-11-19</span>
<span class="stat"><span class="badge b-n">Not In Consideration</span><span class="dash"> - </span><span class="lk">UI/UX Designer</span><span class="dash"> - </span><span class="lk">YouTurn</span></span>
</div>
<div class="row" style="top:303.50px">
<span class="cb" style="left:2.2px;top:5.8px"></span>
<span class="stars"><svg class="st on" viewBox="0 0 24 24"><path d="M12 1.2l3.3 6.9 7.5 1-5.5 5.2 1.4 7.5L12 18.2l-6.7 3.6 1.4-7.5L1.2 9.1l7.5-1z"/></svg><svg class="st on" viewBox="0 0 24 24"><path d="M12 1.2l3.3 6.9 7.5 1-5.5 5.2 1.4 7.5L12 18.2l-6.7 3.6 1.4-7.5L1.2 9.1l7.5-1z"/></svg><svg class="st off" viewBox="0 0 24 24"><path d="M12 1.2l3.3 6.9 7.5 1-5.5 5.2 1.4 7.5L12 18.2l-6.7 3.6 1.4-7.5L1.2 9.1l7.5-1z"/></svg><svg class="st off" viewBox="0 0 24 24"><path d="M12 1.2l3.3 6.9 7.5 1-5.5 5.2 1.4 7.5L12 18.2l-6.7 3.6 1.4-7.5L1.2 9.1l7.5-1z"/></svg><svg class="st off" viewBox="0 0 24 24"><path d="M12 1.2l3.3 6.9 7.5 1-5.5 5.2 1.4 7.5L12 18.2l-6.7 3.6 1.4-7.5L1.2 9.1l7.5-1z"/></svg></span>
<span class="i1"><svg class="ic1" viewBox="0 0 8 10"><path d="M0.6 0.6h4.6l2.2 2.2v6.6H0.6z M5.2 0.6v2.2h2.2" fill="none" stroke="#777" stroke-width="0.9"/><path d="M2 4.3h4M2 5.8h4M2 7.3h4" stroke="#777" stroke-width="0.8"/></svg></span><span class="i2"><svg class="ic2" viewBox="0 0 8 8.5"><path d="M3.2 7.8H0.7V2L2 0.7H6.1Q6.7 0.7 6.7 1.3V3" fill="none" stroke="#b0b0b0" stroke-width="0.75"/><path d="M0.7 2H2V0.7" fill="none" stroke="#b0b0b0" stroke-width="0.6"/><circle cx="4.3" cy="5" r="1.8" fill="none" stroke="#7a7a7a" stroke-width="0.8"/><path d="M5.6 6.3L7.4 8" stroke="#7a7a7a" stroke-width="0.9"/></svg></span>
<span class="nm">Vern Holder</span>
<span class="loc">New Prague, MN</span>
<span class="upd">02-11-19</span>
<span class="stat"><span class="badge b-c">Contacted</span><span class="dash"> - </span><span class="lk">Sales Manager</span><span class="dash"> - </span><span class="lk">Ultimate Foods</span></span>
</div>
<div class="row" style="top:322.25px">
<span class="cb" style="left:2.2px;top:5.8px"></span>
<span class="stars"><svg class="st on" viewBox="0 0 24 24"><path d="M12 1.2l3.3 6.9 7.5 1-5.5 5.2 1.4 7.5L12 18.2l-6.7 3.6 1.4-7.5L1.2 9.1l7.5-1z"/></svg><svg class="st on" viewBox="0 0 24 24"><path d="M12 1.2l3.3 6.9 7.5 1-5.5 5.2 1.4 7.5L12 18.2l-6.7 3.6 1.4-7.5L1.2 9.1l7.5-1z"/></svg><svg class="st on" viewBox="0 0 24 24"><path d="M12 1.2l3.3 6.9 7.5 1-5.5 5.2 1.4 7.5L12 18.2l-6.7 3.6 1.4-7.5L1.2 9.1l7.5-1z"/></svg><svg class="st off" viewBox="0 0 24 24"><path d="M12 1.2l3.3 6.9 7.5 1-5.5 5.2 1.4 7.5L12 18.2l-6.7 3.6 1.4-7.5L1.2 9.1l7.5-1z"/></svg><svg class="st off" viewBox="0 0 24 24"><path d="M12 1.2l3.3 6.9 7.5 1-5.5 5.2 1.4 7.5L12 18.2l-6.7 3.6 1.4-7.5L1.2 9.1l7.5-1z"/></svg></span>
<span class="i1"><svg class="ic1" viewBox="0 0 8 10"><path d="M0.6 0.6h4.6l2.2 2.2v6.6H0.6z M5.2 0.6v2.2h2.2" fill="none" stroke="#777" stroke-width="0.9"/><path d="M2 4.3h4M2 5.8h4M2 7.3h4" stroke="#777" stroke-width="0.8"/></svg></span><span class="i2"><svg class="ic2" viewBox="0 0 8 8.5"><path d="M3.2 7.8H0.7V2L2 0.7H6.1Q6.7 0.7 6.7 1.3V3" fill="none" stroke="#b0b0b0" stroke-width="0.75"/><path d="M0.7 2H2V0.7" fill="none" stroke="#b0b0b0" stroke-width="0.6"/><circle cx="4.3" cy="5" r="1.8" fill="none" stroke="#7a7a7a" stroke-width="0.8"/><path d="M5.6 6.3L7.4 8" stroke="#7a7a7a" stroke-width="0.9"/></svg></span>
<span class="nm">Jon Halverston</span>
<span class="loc">St. Paul, MN</span>
<span class="upd">02-11-19</span>
<span class="stat"><span class="badge b-n">Not In Consideration</span><span class="dash"> - </span><span class="lk">Analytical Chemist</span><span class="dash"> - </span><span class="lk">White Vest Pharma</span></span>
</div>
<div class="row" style="top:341.00px">
<span class="cb" style="left:2.2px;top:5.8px"></span>
<span class="stars"><svg class="st on" viewBox="0 0 24 24"><path d="M12 1.2l3.3 6.9 7.5 1-5.5 5.2 1.4 7.5L12 18.2l-6.7 3.6 1.4-7.5L1.2 9.1l7.5-1z"/></svg><svg class="st on" viewBox="0 0 24 24"><path d="M12 1.2l3.3 6.9 7.5 1-5.5 5.2 1.4 7.5L12 18.2l-6.7 3.6 1.4-7.5L1.2 9.1l7.5-1z"/></svg><svg class="st off" viewBox="0 0 24 24"><path d="M12 1.2l3.3 6.9 7.5 1-5.5 5.2 1.4 7.5L12 18.2l-6.7 3.6 1.4-7.5L1.2 9.1l7.5-1z"/></svg><svg class="st off" viewBox="0 0 24 24"><path d="M12 1.2l3.3 6.9 7.5 1-5.5 5.2 1.4 7.5L12 18.2l-6.7 3.6 1.4-7.5L1.2 9.1l7.5-1z"/></svg><svg class="st off" viewBox="0 0 24 24"><path d="M12 1.2l3.3 6.9 7.5 1-5.5 5.2 1.4 7.5L12 18.2l-6.7 3.6 1.4-7.5L1.2 9.1l7.5-1z"/></svg></span>
<span class="i1"><svg class="ic1" viewBox="0 0 8 10"><path d="M0.6 0.6h4.6l2.2 2.2v6.6H0.6z M5.2 0.6v2.2h2.2" fill="none" stroke="#777" stroke-width="0.9"/><path d="M2 4.3h4M2 5.8h4M2 7.3h4" stroke="#777" stroke-width="0.8"/></svg></span><span class="i2"><svg class="ic2" viewBox="0 0 8 8.5"><path d="M3.2 7.8H0.7V2L2 0.7H6.1Q6.7 0.7 6.7 1.3V3" fill="none" stroke="#b0b0b0" stroke-width="0.75"/><path d="M0.7 2H2V0.7" fill="none" stroke="#b0b0b0" stroke-width="0.6"/><circle cx="4.3" cy="5" r="1.8" fill="none" stroke="#7a7a7a" stroke-width="0.8"/><path d="M5.6 6.3L7.4 8" stroke="#7a7a7a" stroke-width="0.9"/></svg></span>
<span class="nm">Roderick Goodwin</span>
<span class="loc">Champlin, MN</span>
<span class="upd">02-11-19</span>
<span class="stat"><span class="badge b-d">Client Declined</span><span class="dash"> - </span><span class="lk">UI/UX Designer</span><span class="dash"> - </span><span class="lk">YouTurn</span></span>
</div>
<div class="row" style="top:359.75px">
<span class="cb" style="left:2.2px;top:5.8px"></span>
<span class="stars"><svg class="st on" viewBox="0 0 24 24"><path d="M12 1.2l3.3 6.9 7.5 1-5.5 5.2 1.4 7.5L12 18.2l-6.7 3.6 1.4-7.5L1.2 9.1l7.5-1z"/></svg><svg class="st on" viewBox="0 0 24 24"><path d="M12 1.2l3.3 6.9 7.5 1-5.5 5.2 1.4 7.5L12 18.2l-6.7 3.6 1.4-7.5L1.2 9.1l7.5-1z"/></svg><svg class="st on" viewBox="0 0 24 24"><path d="M12 1.2l3.3 6.9 7.5 1-5.5 5.2 1.4 7.5L12 18.2l-6.7 3.6 1.4-7.5L1.2 9.1l7.5-1z"/></svg><svg class="st off" viewBox="0 0 24 24"><path d="M12 1.2l3.3 6.9 7.5 1-5.5 5.2 1.4 7.5L12 18.2l-6.7 3.6 1.4-7.5L1.2 9.1l7.5-1z"/></svg><svg class="st off" viewBox="0 0 24 24"><path d="M12 1.2l3.3 6.9 7.5 1-5.5 5.2 1.4 7.5L12 18.2l-6.7 3.6 1.4-7.5L1.2 9.1l7.5-1z"/></svg></span>
<span class="i1"><svg class="ic1" viewBox="0 0 8 10"><path d="M0.6 0.6h4.6l2.2 2.2v6.6H0.6z M5.2 0.6v2.2h2.2" fill="none" stroke="#777" stroke-width="0.9"/><path d="M2 4.3h4M2 5.8h4M2 7.3h4" stroke="#777" stroke-width="0.8"/></svg></span><span class="i2"><svg class="ic2" viewBox="0 0 8 8.5"><path d="M3.2 7.8H0.7V2L2 0.7H6.1Q6.7 0.7 6.7 1.3V3" fill="none" stroke="#b0b0b0" stroke-width="0.75"/><path d="M0.7 2H2V0.7" fill="none" stroke="#b0b0b0" stroke-width="0.6"/><circle cx="4.3" cy="5" r="1.8" fill="none" stroke="#7a7a7a" stroke-width="0.8"/><path d="M5.6 6.3L7.4 8" stroke="#7a7a7a" stroke-width="0.9"/></svg></span>
<span class="nm">Chris Franklin</span>
<span class="loc">Elk River, MN</span>
<span class="upd">02-12-19</span>
<span class="stat"><span class="badge b-q">Qualifying</span><span class="dash"> - </span><span class="lk">Energy Efficiency Account Manager</span><span class="dash"> - </span><span class="lk">RERI (Renewable Energy Resources Inc)</span></span>
</div>
<div class="row" style="top:378.50px">
<span class="cb" style="left:2.2px;top:5.8px"></span>
<span class="stars"><svg class="st on" viewBox="0 0 24 24"><path d="M12 1.2l3.3 6.9 7.5 1-5.5 5.2 1.4 7.5L12 18.2l-6.7 3.6 1.4-7.5L1.2 9.1l7.5-1z"/></svg><svg class="st on" viewBox="0 0 24 24"><path d="M12 1.2l3.3 6.9 7.5 1-5.5 5.2 1.4 7.5L12 18.2l-6.7 3.6 1.4-7.5L1.2 9.1l7.5-1z"/></svg><svg class="st on" viewBox="0 0 24 24"><path d="M12 1.2l3.3 6.9 7.5 1-5.5 5.2 1.4 7.5L12 18.2l-6.7 3.6 1.4-7.5L1.2 9.1l7.5-1z"/></svg><svg class="st on" viewBox="0 0 24 24"><path d="M12 1.2l3.3 6.9 7.5 1-5.5 5.2 1.4 7.5L12 18.2l-6.7 3.6 1.4-7.5L1.2 9.1l7.5-1z"/></svg><svg class="st on" viewBox="0 0 24 24"><path d="M12 1.2l3.3 6.9 7.5 1-5.5 5.2 1.4 7.5L12 18.2l-6.7 3.6 1.4-7.5L1.2 9.1l7.5-1z"/></svg></span>
<span class="i1"><svg class="ic1" viewBox="0 0 8 10"><path d="M0.6 0.6h4.6l2.2 2.2v6.6H0.6z M5.2 0.6v2.2h2.2" fill="none" stroke="#777" stroke-width="0.9"/><path d="M2 4.3h4M2 5.8h4M2 7.3h4" stroke="#777" stroke-width="0.8"/></svg></span><span class="i2"><svg class="ic2" viewBox="0 0 8 8.5"><path d="M3.2 7.8H0.7V2L2 0.7H6.1Q6.7 0.7 6.7 1.3V3" fill="none" stroke="#b0b0b0" stroke-width="0.75"/><path d="M0.7 2H2V0.7" fill="none" stroke="#b0b0b0" stroke-width="0.6"/><circle cx="4.3" cy="5" r="1.8" fill="none" stroke="#7a7a7a" stroke-width="0.8"/><path d="M5.6 6.3L7.4 8" stroke="#7a7a7a" stroke-width="0.9"/></svg></span>
<span class="nm">Brianna Davis</span>
<span class="loc">Minneapolis, MN</span>
<span class="upd">03-04-19</span>
<span class="stat"><span class="badge b-e">No Contact - Email</span><span class="dash"> - </span><span class="lk">Technical Support Representative</span><span class="dash"> - </span><span class="lk">XYZ Software</span></span>
</div>
<div class="row" style="top:397.25px">
<span class="cb" style="left:2.2px;top:5.8px"></span>
<span class="stars"><svg class="st on" viewBox="0 0 24 24"><path d="M12 1.2l3.3 6.9 7.5 1-5.5 5.2 1.4 7.5L12 18.2l-6.7 3.6 1.4-7.5L1.2 9.1l7.5-1z"/></svg><svg class="st on" viewBox="0 0 24 24"><path d="M12 1.2l3.3 6.9 7.5 1-5.5 5.2 1.4 7.5L12 18.2l-6.7 3.6 1.4-7.5L1.2 9.1l7.5-1z"/></svg><svg class="st off" viewBox="0 0 24 24"><path d="M12 1.2l3.3 6.9 7.5 1-5.5 5.2 1.4 7.5L12 18.2l-6.7 3.6 1.4-7.5L1.2 9.1l7.5-1z"/></svg><svg class="st off" viewBox="0 0 24 24"><path d="M12 1.2l3.3 6.9 7.5 1-5.5 5.2 1.4 7.5L12 18.2l-6.7 3.6 1.4-7.5L1.2 9.1l7.5-1z"/></svg><svg class="st off" viewBox="0 0 24 24"><path d="M12 1.2l3.3 6.9 7.5 1-5.5 5.2 1.4 7.5L12 18.2l-6.7 3.6 1.4-7.5L1.2 9.1l7.5-1z"/></svg></span>
<span class="i1"><svg class="ic1" viewBox="0 0 8 10"><path d="M0.6 0.6h4.6l2.2 2.2v6.6H0.6z M5.2 0.6v2.2h2.2" fill="none" stroke="#777" stroke-width="0.9"/><path d="M2 4.3h4M2 5.8h4M2 7.3h4" stroke="#777" stroke-width="0.8"/></svg></span><span class="i2"><svg class="ic2" viewBox="0 0 8 8.5"><path d="M3.2 7.8H0.7V2L2 0.7H6.1Q6.7 0.7 6.7 1.3V3" fill="none" stroke="#b0b0b0" stroke-width="0.75"/><path d="M0.7 2H2V0.7" fill="none" stroke="#b0b0b0" stroke-width="0.6"/><circle cx="4.3" cy="5" r="1.8" fill="none" stroke="#7a7a7a" stroke-width="0.8"/><path d="M5.6 6.3L7.4 8" stroke="#7a7a7a" stroke-width="0.9"/></svg></span>
<span class="nm">Dave Candels</span>
<span class="loc">St. Louis Park, MN</span>
<span class="upd">03-11-19</span>
<span class="stat"><span class="badge b-s">Submitted</span><span class="dash"> - </span><span class="lk">Sales Manager</span><span class="dash"> - </span><span class="lk">Ultimate Foods</span></span>
</div>
<div class="row" style="top:416.00px">
<span class="cb" style="left:2.2px;top:5.8px"></span>
<span class="stars"><svg class="st on" viewBox="0 0 24 24"><path d="M12 1.2l3.3 6.9 7.5 1-5.5 5.2 1.4 7.5L12 18.2l-6.7 3.6 1.4-7.5L1.2 9.1l7.5-1z"/></svg><svg class="st on" viewBox="0 0 24 24"><path d="M12 1.2l3.3 6.9 7.5 1-5.5 5.2 1.4 7.5L12 18.2l-6.7 3.6 1.4-7.5L1.2 9.1l7.5-1z"/></svg><svg class="st on" viewBox="0 0 24 24"><path d="M12 1.2l3.3 6.9 7.5 1-5.5 5.2 1.4 7.5L12 18.2l-6.7 3.6 1.4-7.5L1.2 9.1l7.5-1z"/></svg><svg class="st on" viewBox="0 0 24 24"><path d="M12 1.2l3.3 6.9 7.5 1-5.5 5.2 1.4 7.5L12 18.2l-6.7 3.6 1.4-7.5L1.2 9.1l7.5-1z"/></svg><svg class="st off" viewBox="0 0 24 24"><path d="M12 1.2l3.3 6.9 7.5 1-5.5 5.2 1.4 7.5L12 18.2l-6.7 3.6 1.4-7.5L1.2 9.1l7.5-1z"/></svg></span>
<span class="i1"><svg class="ic1" viewBox="0 0 8 10"><path d="M0.6 0.6h4.6l2.2 2.2v6.6H0.6z M5.2 0.6v2.2h2.2" fill="none" stroke="#777" stroke-width="0.9"/><path d="M2 4.3h4M2 5.8h4M2 7.3h4" stroke="#777" stroke-width="0.8"/></svg></span><span class="i2"><svg class="ic2" viewBox="0 0 8 8.5"><path d="M3.2 7.8H0.7V2L2 0.7H6.1Q6.7 0.7 6.7 1.3V3" fill="none" stroke="#b0b0b0" stroke-width="0.75"/><path d="M0.7 2H2V0.7" fill="none" stroke="#b0b0b0" stroke-width="0.6"/><circle cx="4.3" cy="5" r="1.8" fill="none" stroke="#7a7a7a" stroke-width="0.8"/><path d="M5.6 6.3L7.4 8" stroke="#7a7a7a" stroke-width="0.9"/></svg></span>
<span class="nm">Mikal Calfsten</span>
<span class="loc">Eagan, MN</span>
<span class="upd">02-12-19</span>
<span class="stat"><span class="badge b-a">Client Approved</span><span class="dash"> - </span><span class="lk">Production Floor Supervisor</span><span class="dash"> - </span><span class="lk">Gredion Incorporated</span></span>
</div>
<div class="row" style="top:434.75px">
<span class="cb" style="left:2.2px;top:5.8px"></span>
<span class="stars"><svg class="st on" viewBox="0 0 24 24"><path d="M12 1.2l3.3 6.9 7.5 1-5.5 5.2 1.4 7.5L12 18.2l-6.7 3.6 1.4-7.5L1.2 9.1l7.5-1z"/></svg><svg class="st on" viewBox="0 0 24 24"><path d="M12 1.2l3.3 6.9 7.5 1-5.5 5.2 1.4 7.5L12 18.2l-6.7 3.6 1.4-7.5L1.2 9.1l7.5-1z"/></svg><svg class="st off" viewBox="0 0 24 24"><path d="M12 1.2l3.3 6.9 7.5 1-5.5 5.2 1.4 7.5L12 18.2l-6.7 3.6 1.4-7.5L1.2 9.1l7.5-1z"/></svg><svg class="st off" viewBox="0 0 24 24"><path d="M12 1.2l3.3 6.9 7.5 1-5.5 5.2 1.4 7.5L12 18.2l-6.7 3.6 1.4-7.5L1.2 9.1l7.5-1z"/></svg><svg class="st off" viewBox="0 0 24 24"><path d="M12 1.2l3.3 6.9 7.5 1-5.5 5.2 1.4 7.5L12 18.2l-6.7 3.6 1.4-7.5L1.2 9.1l7.5-1z"/></svg></span>
<span class="i1"><svg class="ic1" viewBox="0 0 8 10"><path d="M0.6 0.6h4.6l2.2 2.2v6.6H0.6z M5.2 0.6v2.2h2.2" fill="none" stroke="#777" stroke-width="0.9"/><path d="M2 4.3h4M2 5.8h4M2 7.3h4" stroke="#777" stroke-width="0.8"/></svg></span><span class="i2"><svg class="ic2" viewBox="0 0 8 8.5"><path d="M3.2 7.8H0.7V2L2 0.7H6.1Q6.7 0.7 6.7 1.3V3" fill="none" stroke="#b0b0b0" stroke-width="0.75"/><path d="M0.7 2H2V0.7" fill="none" stroke="#b0b0b0" stroke-width="0.6"/><circle cx="4.3" cy="5" r="1.8" fill="none" stroke="#7a7a7a" stroke-width="0.8"/><path d="M5.6 6.3L7.4 8" stroke="#7a7a7a" stroke-width="0.9"/></svg></span>
<span class="nm">Jordan Burch</span>
<span class="loc">Burnsville, MN</span>
<span class="upd">02-12-19</span>
<span class="stat"><span class="badge b-a">Client Approved</span><span class="dash"> - </span><span class="lk">UI/UX Designer</span><span class="dash"> - </span><span class="lk">ICT (In-Control Technology)</span></span>
</div>
<div class="row" style="top:453.50px">
<span class="cb" style="left:2.2px;top:5.8px"></span>
<span class="stars"><svg class="st on" viewBox="0 0 24 24"><path d="M12 1.2l3.3 6.9 7.5 1-5.5 5.2 1.4 7.5L12 18.2l-6.7 3.6 1.4-7.5L1.2 9.1l7.5-1z"/></svg><svg class="st on" viewBox="0 0 24 24"><path d="M12 1.2l3.3 6.9 7.5 1-5.5 5.2 1.4 7.5L12 18.2l-6.7 3.6 1.4-7.5L1.2 9.1l7.5-1z"/></svg><svg class="st on" viewBox="0 0 24 24"><path d="M12 1.2l3.3 6.9 7.5 1-5.5 5.2 1.4 7.5L12 18.2l-6.7 3.6 1.4-7.5L1.2 9.1l7.5-1z"/></svg><svg class="st on" viewBox="0 0 24 24"><path d="M12 1.2l3.3 6.9 7.5 1-5.5 5.2 1.4 7.5L12 18.2l-6.7 3.6 1.4-7.5L1.2 9.1l7.5-1z"/></svg><svg class="st off" viewBox="0 0 24 24"><path d="M12 1.2l3.3 6.9 7.5 1-5.5 5.2 1.4 7.5L12 18.2l-6.7 3.6 1.4-7.5L1.2 9.1l7.5-1z"/></svg></span>
<span class="i1"><svg class="ic1" viewBox="0 0 8 10"><path d="M0.6 0.6h4.6l2.2 2.2v6.6H0.6z M5.2 0.6v2.2h2.2" fill="none" stroke="#777" stroke-width="0.9"/><path d="M2 4.3h4M2 5.8h4M2 7.3h4" stroke="#777" stroke-width="0.8"/></svg></span><span class="i2"><svg class="ic2" viewBox="0 0 8 8.5"><path d="M3.2 7.8H0.7V2L2 0.7H6.1Q6.7 0.7 6.7 1.3V3" fill="none" stroke="#b0b0b0" stroke-width="0.75"/><path d="M0.7 2H2V0.7" fill="none" stroke="#b0b0b0" stroke-width="0.6"/><circle cx="4.3" cy="5" r="1.8" fill="none" stroke="#7a7a7a" stroke-width="0.8"/><path d="M5.6 6.3L7.4 8" stroke="#7a7a7a" stroke-width="0.9"/></svg></span>
<span class="nm">Peter Boswell</span>
<span class="loc">Minneapolis, MN</span>
<span class="upd">03-11-19</span>
<span class="stat"><span class="badge b-c">Contacted</span><span class="dash"> - </span><span class="lk">Technical Support Representative</span><span class="dash"> - </span><span class="lk">XYZ Software</span></span>
</div>

<div class="hline" style="left:94.5px;top:472.3px;width:850.5px;background:#ececec"></div>
<!-- footer -->
<div class="cb" style="left:101.2px;top:483.8px"></div>
<div class="btn" style="left:113.4px;top:478.4px;width:43.5px;height:16.7px"></div>
<div class="abs" style="left:119.2px;top:482.4px;font-size:7.5px;line-height:9px;color:#333">Actions</div>
<div class="caret" style="left:147px;top:485.8px"></div>
<div class="btn" style="left:829.5px;top:478.9px;width:15px;height:16.1px"></div>
<svg class="abs" style="left:832.5px;top:483px" width="9" height="8" viewBox="0 0 9 8"><path d="M8.5 4H1M4 0.8L1 4L4 7.2" fill="none" stroke="#444" stroke-width="1.1"/></svg>
<div class="btn" style="left:846.7px;top:478.9px;width:46.9px;height:16.1px"></div>
<div class="abs" style="left:852.5px;top:482.6px;font-size:7.4px;line-height:9px;color:#333">1 / 1 <span style="color:#777">(20)</span></div>
<div class="caret" style="left:884.5px;top:485.8px"></div>
<div class="btn" style="left:896px;top:478.9px;width:15px;height:16.1px"></div>
<svg class="abs" style="left:899px;top:483px" width="9" height="8" viewBox="0 0 9 8"><path d="M0.5 4H8M5 0.8L8 4L5 7.2" fill="none" stroke="#444" stroke-width="1.1"/></svg>
<div class="btn" style="left:913.5px;top:478.9px;width:25.8px;height:16.1px"></div>
<svg class="abs" style="left:918px;top:482.5px" width="10" height="9" viewBox="0 0 10 9"><path d="M0.5 1.5H9.5M0.5 4.5H9.5M0.5 7.5H9.5" stroke="#444" stroke-width="0.8"/><rect x="5.5" y="0.5" width="1.6" height="2" fill="#fff" stroke="#444" stroke-width="0.7"/><rect x="2.5" y="3.5" width="1.6" height="2" fill="#fff" stroke="#444" stroke-width="0.7"/><rect x="5.5" y="6.5" width="1.6" height="2" fill="#fff" stroke="#444" stroke-width="0.7"/></svg>
<div class="caret" style="left:930.5px;top:485.8px"></div>

<!-- dropdown -->
<div id="dd">
  <div class="in"><div class="cur"></div></div>
  <div style="top:22.90px"><span>1</span></div><div style="top:37.45px"><span>5</span></div><div style="top:52.00px"><span>10</span></div><div style="top:66.55px"><span>15</span></div><div style="top:81.10px"><span>20</span></div><div class="hl" style="top:95.65px"><span>30</span></div><div style="top:110.20px"><span>45</span></div><div style="top:124.75px"><span>60</span></div><div style="top:139.30px"><span>90</span></div><div style="top:153.85px"><span>100</span></div>
  <div class="sb"><i></i></div>
</div>
<div class="abs" style="left:958.8px;top:499.5px;width:2px;height:2px;background:#333;border-radius:1px 0 0 0"></div>
</body></html>
